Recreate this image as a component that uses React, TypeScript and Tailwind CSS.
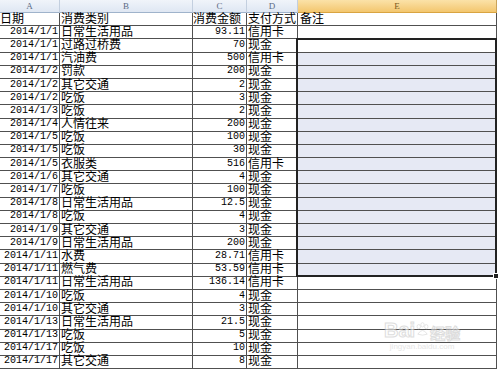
import React from "react";

type Row = [string, string, string, string];

const rows: Row[] = [
  ["2014/1/1", "日常生活用品", "93.11", "信用卡"],
  ["2014/1/1", "过路过桥费", "70", "现金"],
  ["2014/1/1", "汽油费", "500", "信用卡"],
  ["2014/1/2", "罚款", "200", "现金"],
  ["2014/1/2", "其它交通", "2", "现金"],
  ["2014/1/2", "吃饭", "3", "现金"],
  ["2014/1/3", "吃饭", "2", "现金"],
  ["2014/1/4", "人情往来", "200", "现金"],
  ["2014/1/5", "吃饭", "100", "现金"],
  ["2014/1/5", "吃饭", "30", "现金"],
  ["2014/1/5", "衣服类", "516", "信用卡"],
  ["2014/1/6", "其它交通", "4", "现金"],
  ["2014/1/7", "吃饭", "100", "现金"],
  ["2014/1/8", "日常生活用品", "12.5", "现金"],
  ["2014/1/8", "吃饭", "4", "现金"],
  ["2014/1/9", "其它交通", "3", "现金"],
  ["2014/1/9", "日常生活用品", "200", "现金"],
  ["2014/1/11", "水费", "28.71", "信用卡"],
  ["2014/1/11", "燃气费", "53.59", "信用卡"],
  ["2014/1/11", "日常生活用品", "136.14", "信用卡"],
  ["2014/1/10", "吃饭", "4", "现金"],
  ["2014/1/10", "其它交通", "3", "现金"],
  ["2014/1/13", "日常生活用品", "21.5", "现金"],
  ["2014/1/13", "吃饭", "5", "现金"],
  ["2014/1/17", "吃饭", "10", "现金"],
  ["2014/1/17", "其它交通", "8", "现金"],
];

const cell =
  "h-[13.2px] border-r border-b border-[#505050] box-border flex items-center whitespace-nowrap";
const cjk =
  " font-['Noto_Sans_CJK_SC','Noto_Sans',sans-serif] text-[12px] leading-[12px] text-black pb-[3px]";
const mono =
  " font-['Liberation_Mono','DejaVu_Sans_Mono',monospace] text-[10px] leading-[10px] text-black justify-end pr-[1px] pb-[1px]";
const colHead =
  "h-[13px] box-border border-r border-b flex items-center justify-center text-[9px] leading-none font-['Liberation_Serif',serif]";

export default function App() {
  return (
    <div className="relative w-[500px] h-[369px] overflow-hidden bg-white">
      <div className="grid grid-cols-[60px_133px_54px_51px_199px] w-[497px]">
        {["A", "B", "C", "D"].map((l) => (
          <div
            key={l}
            className={
              colHead +
              " border-r-[#c3cfdf] border-b-[#9fb3cb] bg-gradient-to-b from-[#f0f4fa] to-[#dfe7f3] text-[#5b6b84]"
            }
          >
            {l}
          </div>
        ))}
        <div
          className={
            colHead +
            " border-r-[#c9a35a] border-b-[#d9a441] bg-gradient-to-b from-[#fbe2a8] to-[#f3c66d] text-[#7a5a1e]"
          }
        >
          E
        </div>

        <div className={cell + cjk}>日期</div>
        <div className={cell + cjk + " pl-[1px]"}>消费类别</div>
        <div className={cell + cjk}>消费金额</div>
        <div className={cell + cjk + " pl-[1px]"}>支付方式</div>
        <div className={cell + cjk + " pl-[2px]"}>备注</div>

        {rows.map((r, i) => {
          const shaded = i >= 2 && i <= 18;
          return (
            <React.Fragment key={i}>
              <div className={cell + mono}>{r[0]}</div>
              <div className={cell + cjk + " pl-[1px]"}>{r[1]}</div>
              <div className={cell + mono}>{r[2]}</div>
              <div className={cell + cjk + " pl-[1px]"}>{r[3]}</div>
              <div className={cell + (shaded ? " bg-[#e6e9f4]" : " bg-white")} />
            </React.Fragment>
          );
        })}
      </div>

      {/* selection outline overlay */}
      <div className="pointer-events-none absolute left-[296px] top-[38.4px] h-[238.6px] w-[201px] border-2 border-[#222222]" />
      <div className="pointer-events-none absolute left-[493px] top-[273px] h-[6px] w-[6px] border border-white bg-[#222222]" />

      {/* watermark */}
      <div className="pointer-events-none absolute left-[384px] top-[320px] flex select-none flex-col items-center opacity-60">
        <div className="flex items-end font-['Liberation_Sans',sans-serif] text-[20px] font-bold leading-none text-white [-webkit-text-stroke:1px_#c8c8c8]">
          <span>Bai</span>
          <svg width="15" height="15" viewBox="0 0 16 16" className="mb-[3px]">
            <g fill="#ffffff" stroke="#c8c8c8" strokeWidth="0.8">
              <ellipse cx="4" cy="5" rx="1.8" ry="2.3" />
              <ellipse cx="8" cy="3" rx="1.8" ry="2.3" />
              <ellipse cx="12" cy="5" rx="1.8" ry="2.3" />
              <path d="M3 13 Q8 5 13 13 Q8 15 3 13 Z" />
            </g>
          </svg>
          <span className="font-['Noto_Sans_CJK_SC',sans-serif] text-[15px]">经验</span>
        </div>
        <div className="mt-[3px] font-['Liberation_Sans',sans-serif] text-[8px] leading-none text-[#d4d4d4]">
          jingyan.baidu.com
        </div>
      </div>
    </div>
  );
}
